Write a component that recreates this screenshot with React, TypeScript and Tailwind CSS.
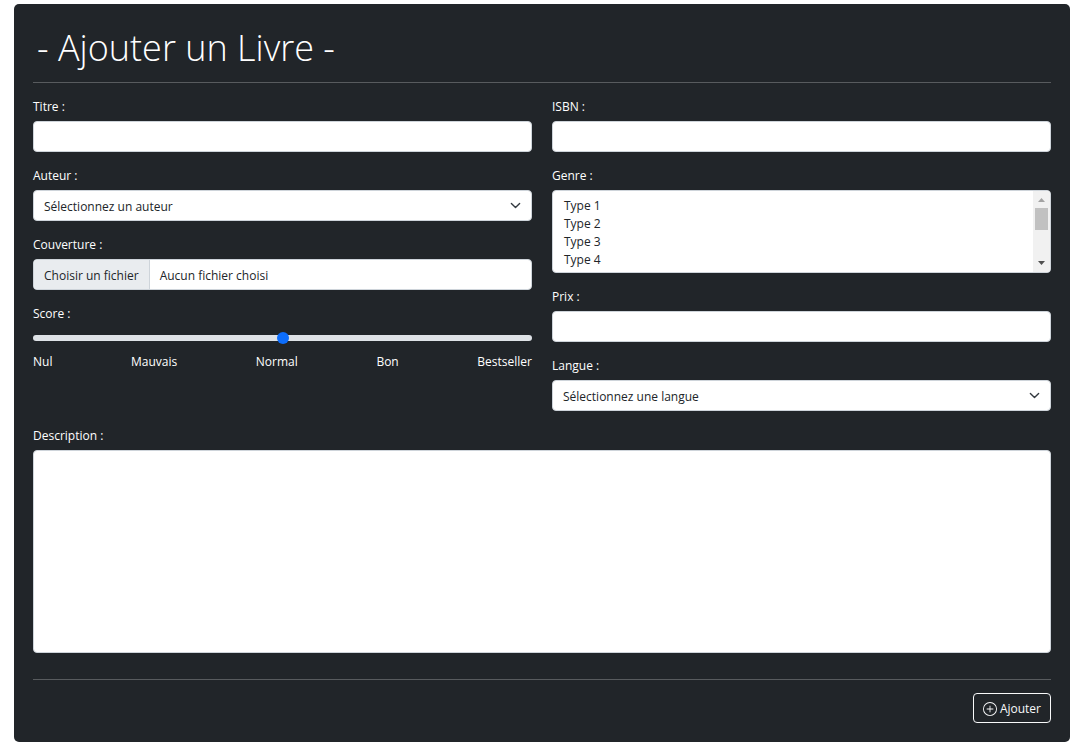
import { useId, useState } from "react";
import type { ReactNode } from "react";
import { BsPlusCircle } from "react-icons/bs";

const box =
  "w-full rounded-[4px] border border-[#ced4da] bg-white text-[12px] leading-5 text-[#212529] focus:outline-2 focus:outline-[#86b7fe]";

const genres = Array.from({ length: 14 }, (_, i) => `Type ${i + 1}`);
const scores = ["Nul", "Mauvais", "Normal", "Bon", "Bestseller"];

function Field({ id, label, children }: { id: string; label: string; children: ReactNode }) {
  return (
    <div className="flex flex-col gap-1">
      <label htmlFor={id} className="self-start font-medium">
        {label}
      </label>
      {children}
    </div>
  );
}

function TextField({ label }: { label: string }) {
  const id = useId();
  return (
    <Field id={id} label={label}>
      <input id={id} type="text" className={`${box} h-[31px] px-2.5`} />
    </Field>
  );
}

function SelectField({ label, placeholder, options }: { label: string; placeholder: string; options: string[] }) {
  const id = useId();
  return (
    <Field id={id} label={label}>
      <div className="relative">
        <select id={id} className={`${box} block h-[31px] appearance-none pt-0.5 pr-8 pl-2.5`}>
          <option>{placeholder}</option>
          {options.map((o) => (
            <option key={o}>{o}</option>
          ))}
        </select>
        <svg
          viewBox="0 0 16 16"
          className="pointer-events-none absolute top-2.5 right-[11px] size-[11px] fill-none stroke-[#343a40] stroke-2"
          strokeLinecap="round"
          strokeLinejoin="round"
        >
          <path d="m2 5 6 6 6-6" />
        </svg>
      </div>
    </Field>
  );
}

function GenreField() {
  const id = useId();
  return (
    <Field id={id} label="Genre :">
      <div className="flex h-[83px] overflow-hidden rounded-[4px] border border-[#ced4da] bg-white">
        <select
          id={id}
          multiple
          size={4}
          className="mt-1.5 mb-[3px] min-w-0 flex-1 overflow-y-auto px-[9px] text-[12px] leading-[18px] text-[#212529] outline-none [scrollbar-width:none]"
        >
          {genres.map((g) => (
            <option key={g} className="h-[18px] min-h-0 px-0.5 py-0">
              {g}
            </option>
          ))}
        </select>
        <div aria-hidden="true" className="flex w-[17px] flex-col items-center bg-[#f1f1f1]">
          <svg viewBox="0 0 17 17" className="size-[17px] fill-[#a3a3a3]">
            <path d="M5 11h7L8.500 7z" />
          </svg>
          <div className="h-[22px] w-[13px] bg-[#c1c1c1]" />
          <svg viewBox="0 0 17 17" className="mt-auto size-[17px] fill-[#505050]">
            <path d="M5 6h7L8.500 10z" />
          </svg>
        </div>
      </div>
    </Field>
  );
}

function FileField() {
  const id = useId();
  const [name, setName] = useState("Aucun fichier choisi");
  return (
    <Field id={id} label="Couverture :">
      <label htmlFor={id} className={`${box} relative flex h-[31px] items-stretch overflow-hidden`}>
        <input
          id={id}
          type="file"
          className="sr-only"
          onChange={(e) => setName(e.target.files?.[0]?.name ?? "Aucun fichier choisi")}
        />
        <span className="flex items-center border-r border-[#ced4da] bg-[#e9ecef] px-2.5 pt-0.5">Choisir un fichier</span>
        <span className="flex items-center px-2.5 pt-0.5">{name}</span>
      </label>
    </Field>
  );
}

function ScoreField() {
  const id = useId();
  return (
    <Field id={id} label="Score :">
      <input
        id={id}
        type="range"
        min={0}
        max={4}
        defaultValue={2}
        className="mt-1 block h-3 w-full appearance-none bg-transparent [&::-webkit-slider-runnable-track]:h-1.5 [&::-webkit-slider-runnable-track]:rounded-full [&::-webkit-slider-runnable-track]:bg-[#dee2e6] [&::-webkit-slider-thumb]:-mt-[3px] [&::-webkit-slider-thumb]:size-3 [&::-webkit-slider-thumb]:appearance-none [&::-webkit-slider-thumb]:rounded-full [&::-webkit-slider-thumb]:bg-[#0d6efd]"
      />
      <div className="mt-1 flex justify-between font-medium">
        {scores.map((s) => (
          <span key={s}>{s}</span>
        ))}
      </div>
    </Field>
  );
}

export default function App() {
  const descriptionId = useId();
  return (
    <main className="mt-1 mr-2.5 mb-2 ml-3.5 rounded-[5px] bg-[#212529] px-[19px] pt-[19px] pb-[19px] font-['Open_Sans','Noto_Sans',sans-serif] text-[12px] leading-5 text-white">
      <h1 className="pb-[9px] pl-1 text-[36px] leading-[50px] font-light">- Ajouter un Livre -</h1>
      <hr className="border-[#585b5e]" />
      <form onSubmit={(e) => e.preventDefault()}>
        <div className="mt-3.5 grid grid-cols-2 gap-x-5">
          <div className="flex flex-col gap-3.5">
            <TextField label="Titre :" />
            <SelectField label="Auteur :" placeholder="Sélectionnez un auteur" options={[]} />
            <FileField />
            <ScoreField />
          </div>
          <div className="flex flex-col gap-3.5">
            <TextField label="ISBN :" />
            <GenreField />
            <TextField label="Prix :" />
            <SelectField label="Langue :" placeholder="Sélectionnez une langue" options={["Français", "Anglais"]} />
          </div>
        </div>
        <div className="mt-[15px]">
          <Field id={descriptionId} label="Description :">
            <textarea id={descriptionId} className={`${box} block h-[203px] resize-none px-2.5 py-1`} />
          </Field>
        </div>
        <hr className="mt-[26px] border-[#585b5e]" />
        <div className="mt-[13px] flex justify-end">
          <button
            type="submit"
            className="flex h-[30px] items-center gap-[3px] rounded-[4px] border border-[#f8f9fa] px-[9px] pt-0.5 font-medium text-[#f8f9fa]"
          >
            <BsPlusCircle className="size-3.5" />
            Ajouter
          </button>
        </div>
      </form>
    </main>
  );
}
